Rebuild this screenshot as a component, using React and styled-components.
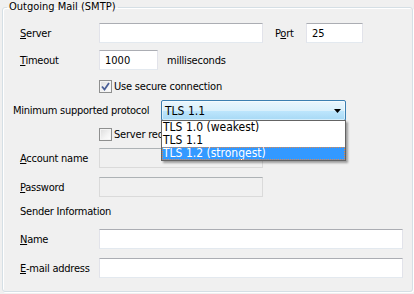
import React from 'react'
import styled, { createGlobalStyle } from 'styled-components'

const GlobalStyle = createGlobalStyle`
  html, body {
    margin: 0;
    padding: 0;
    background: #f0f0f0;
  }
  body {
    font-family: "DejaVu Sans Condensed", "Liberation Sans", sans-serif;
    font-size: 11px;
    color: #000;
  }
`

const Page = styled.div`
  width: 414px;
  height: 294px;
  overflow: hidden;
  box-sizing: border-box;
  padding: 0 1px 0 2px;
`

const Group = styled.fieldset`
  margin: 0;
  padding: 0 0 13px 0;
  min-width: 0;
  border: 1px solid #d5dfe5;
  border-radius: 3px;
  box-shadow: inset 1px 1px 0 #fff, 1px 1px 0 #fff;
`

const Legend = styled.legend`
  margin-left: 4px;
  padding: 0 2px;
  line-height: 14px;
`

const Body = styled.div`
  padding-left: 17px;
`

const Row = styled.div`
  display: flex;
  align-items: center;
  height: ${p => p.h || 20}px;
  margin-top: ${p => p.gap}px;
  padding-left: ${p => p.indent || 0}px;
`

const Label = styled.label`
  flex: none;
  width: ${p => p.w || 79}px;
  margin-left: ${p => p.shift || 0}px;
  line-height: 13px;
  letter-spacing: -0.25px;
  white-space: nowrap;
`

const Key = styled.span`
  text-decoration: underline;
`

const TextInput = styled.input`
  box-sizing: border-box;
  flex: none;
  width: ${p => p.w}px;
  height: 20px;
  margin: 0;
  padding: 0 5px;
  border: 1px solid;
  border-color: #abadb3 #e2e3ea #e3e9ef #e2e3ea;
  background: #fff;
  font: inherit;
  color: #000;
  outline: none;

  &:disabled {
    background: #f0f0f0;
    border-color: #adb2b5 #dadada #dadada #dadada;
  }
`

const Suffix = styled.span`
  margin-left: 9px;
  letter-spacing: -0.2px;
`

const CheckLabel = styled.label`
  display: flex;
  align-items: center;
  gap: 2px;
  white-space: nowrap;
  letter-spacing: -0.2px;
`

const Box = styled.span`
  box-sizing: border-box;
  width: 13px;
  height: 13px;
  border: 1px solid #8e8f8f;
  background: linear-gradient(135deg, #dcdcdc 0%, #f4f4f4 60%, #fff 100%);
  box-shadow: inset 0 0 0 1px #f4f4f4;
  display: flex;
  align-items: center;
  justify-content: center;
`

const Combo = styled.div`
  position: relative;
  box-sizing: border-box;
  flex: none;
  width: 185px;
  height: 21px;
  border: 1px solid #3c7fb1;
  border-radius: 2px;
  background: linear-gradient(to bottom, #eaf6fd 0%, #d9f0fc 50%, #bee6fd 50%, #a7d9f5 100%);
  box-shadow: inset 0 0 0 1px rgba(255, 255, 255, 0.5);
  display: flex;
  align-items: center;
  justify-content: space-between;
  padding: 0 4px 0 3px;
`

const ComboText = styled.span`
  font-size: 12px;
  line-height: 14px;
`

const List = styled.ul`
  position: absolute;
  top: 19px;
  left: -1px;
  width: 185px;
  box-sizing: border-box;
  margin: 0;
  padding: 0;
  list-style: none;
  background: #fff;
  border: 1px solid #646464;
  box-shadow: 2px 2px 2px rgba(0, 0, 0, 0.35);
  z-index: 2;
`

const Item = styled.li`
  height: 13px;
  line-height: 13px;
  padding-left: 1px;
  font-size: 12px;
  white-space: nowrap;
  background: ${p => (p.selected ? '#3399ff' : 'transparent')};
  color: ${p => (p.selected ? '#fff' : '#000')};
  outline: ${p => (p.selected ? '1px dotted #e0884a' : 'none')};
  outline-offset: -1px;
`

const Plain = styled.div`
  line-height: 14px;
  letter-spacing: -0.25px;
`

function CheckBox ({ checked, children }) {
  return (
    <CheckLabel>
      <Box>
        {checked && (
          <svg width="9" height="9" viewBox="0 0 9 9">
            <path d="M1 4.5 L3.5 7.5 L8 1" fill="none" stroke="#4a5f97" strokeWidth="1.8" />
          </svg>
        )}
      </Box>
      {children}
    </CheckLabel>
  )
}

const PROTOCOLS = ['TLS 1.0 (weakest)', 'TLS 1.1', 'TLS 1.2 (strongest)']

export default function App () {
  return (
    <Page>
      <GlobalStyle />
      <Group>
        <Legend>Outgoing Mail (SMTP)</Legend>
        <Body>
          <Row gap={9}>
            <Label><Key>S</Key>erver</Label>
            <TextInput w={164} />
            <Label w={31} shift={12}>P<Key>o</Key>rt</Label>
            <TextInput w={57} defaultValue="25" />
          </Row>
          <Row gap={7}>
            <Label><Key>T</Key>imeout</Label>
            <TextInput w={59} defaultValue="1000" />
            <Suffix>milliseconds</Suffix>
          </Row>
          <Row gap={10} h={13} indent={79}>
            <CheckBox checked>Use secure connection</CheckBox>
          </Row>
          <Row gap={7} h={21}>
            <Label w={148} shift={-7}>Minimum supported protocol</Label>
            <Combo>
              <ComboText>TLS 1.1</ComboText>
              <svg width="7" height="4" viewBox="0 0 7 4">
                <path d="M0 0 H7 L3.5 4 Z" fill="#000" />
              </svg>
              <List>
                {PROTOCOLS.map((p, i) => (
                  <Item key={i} selected={i === 2}>{p}</Item>
                ))}
              </List>
            </Combo>
          </Row>
          <Row gap={7} h={13} indent={79}>
            <CheckBox>Server requires authentication</CheckBox>
          </Row>
          <Row gap={7}>
            <Label><Key>A</Key>ccount name</Label>
            <TextInput w={164} disabled />
          </Row>
          <Row gap={9}>
            <Label><Key>P</Key>assword</Label>
            <TextInput w={164} type="password" disabled />
          </Row>
          <Row gap={8} h={14}>
            <Plain>Sender Information</Plain>
          </Row>
          <Row gap={10}>
            <Label><Key>N</Key>ame</Label>
            <TextInput w={304} />
          </Row>
          <Row gap={9}>
            <Label><Key>E</Key>-mail address</Label>
            <TextInput w={304} />
          </Row>
        </Body>
      </Group>
    </Page>
  )
}
